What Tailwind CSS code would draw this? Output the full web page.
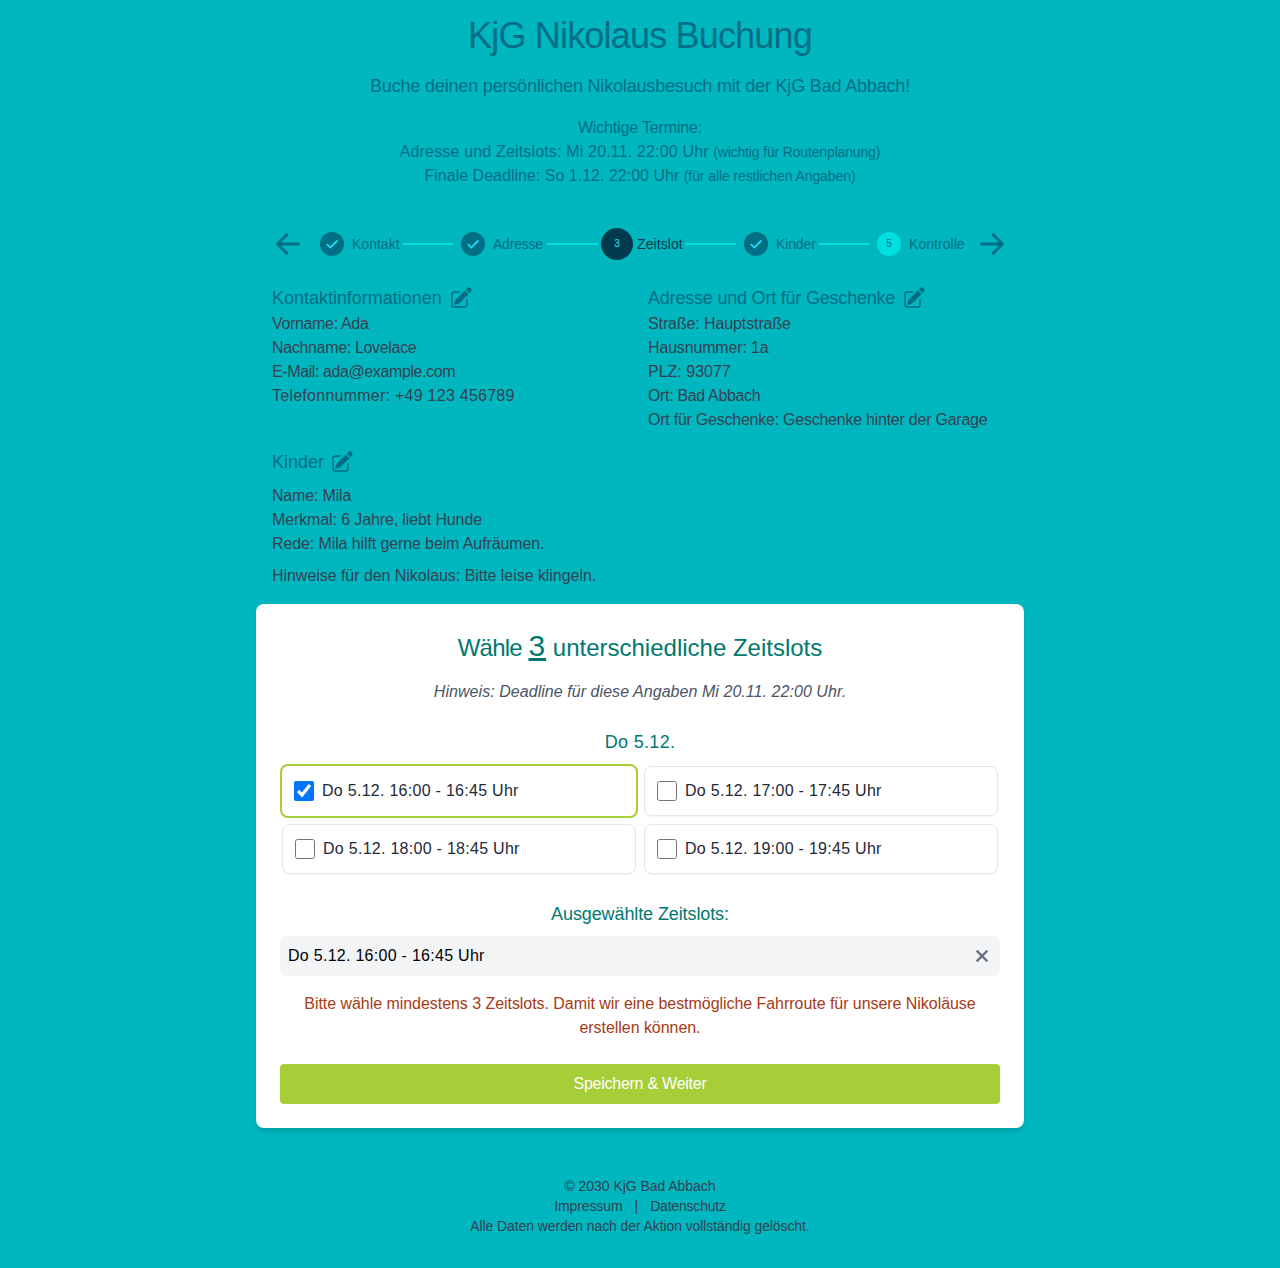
<!DOCTYPE html>
<html lang="de">
<head>
<meta charset="utf-8">
<title>KjG Nikolaus Buchung</title>
<script src="https://cdn.jsdelivr.net/npm/@tailwindcss/browser@4"></script>
</head>
<body class="min-h-screen bg-[#00b6bf] font-['Liberation_Sans',Arial,sans-serif] text-base text-gray-700">
<svg class="hidden">
  <symbol id="edit" viewBox="0 0 24 24"><path d="M21.731 2.269a2.625 2.625 0 0 0-3.712 0l-1.157 1.157 3.712 3.712 1.157-1.157a2.625 2.625 0 0 0 0-3.712ZM19.513 8.199l-3.712-3.712-8.4 8.4a5.25 5.25 0 0 0-1.32 2.214l-.8 2.685a.75.75 0 0 0 .933.933l2.685-.8a5.25 5.25 0 0 0 2.214-1.32l8.4-8.4Z"/><path d="M5.25 5.25a3 3 0 0 0-3 3v10.5a3 3 0 0 0 3 3h10.5a3 3 0 0 0 3-3V13.5a.75.75 0 0 0-1.5 0v5.25a1.5 1.5 0 0 1-1.5 1.5H5.25a1.5 1.5 0 0 1-1.5-1.5V8.25a1.5 1.5 0 0 1 1.5-1.5h5.25a.75.75 0 0 0 0-1.5H5.25Z"/></symbol>
  <symbol id="check" viewBox="0 0 24 24"><path d="m6.8 12 3.6 3.6 7-7.2" fill="none" stroke="currentColor" stroke-width="1.7"/></symbol>
</svg>
<div class="mx-auto w-[768px] pt-4">
  <header class="text-center text-[#006e85]">
    <h1 class="text-4xl leading-10 tracking-[-0.82px]">KjG Nikolaus Buchung</h1>
    <p class="mt-4 text-lg leading-7 tracking-[-0.178px]">Buche deinen persönlichen Nikolausbesuch mit der KjG Bad Abbach!</p>
    <div class="mt-4 leading-6">
      <p class="tracking-[-0.16px]">Wichtige Termine:</p>
      <p><span class="tracking-[0.165px]">Adresse und Zeitslots: Mi 20.11. 22:00 Uhr</span> <span class="text-sm leading-none tracking-[-0.153px]">(wichtig für Routenplanung)</span></p>
      <p><span class="tracking-[0.012px]">Finale Deadline: So 1.12. 22:00 Uhr</span> <span class="text-sm leading-none tracking-[-0.09px]">(für alle restlichen Angaben)</span></p>
    </div>
  </header>

  <nav class="mt-10 flex h-8 items-center px-4 text-sm whitespace-nowrap text-[#006e85]">
    <svg class="mr-4 size-8 shrink-0" viewBox="0 0 32 32" fill="none" stroke="currentColor" stroke-width="3" stroke-linecap="round" stroke-linejoin="round"><path d="M14.8 6.7 5.6 16l9.2 9.3M5.6 16h20.9"/></svg>
    <div class="size-6 shrink-0 rounded-full bg-[#006e85] text-[#22e0ff]"><svg class="size-6"><use href="#check"/></svg></div>
    <span class="ml-2 w-[47px] tracking-[0.017px]">Kontakt</span>
    <div class="mx-1 h-0.5 w-[50px] shrink-0 bg-[#00dfe0]"></div>
    <div class="ml-1 size-6 shrink-0 rounded-full bg-[#006e85] text-[#22e0ff]"><svg class="size-6"><use href="#check"/></svg></div>
    <span class="ml-2 w-[50px] tracking-[-0.22px]">Adresse</span>
    <div class="mx-1 h-0.5 w-[50px] shrink-0 bg-[#00dfe0]"></div>
    <div class="flex size-8 shrink-0 items-center justify-center rounded-full bg-[#003b4d] text-[10px] text-[#22e0ff]">3</div>
    <span class="ml-1 w-[45px] tracking-[0.085px] text-[#003b4d]">Zeitslot</span>
    <div class="mx-1 h-0.5 w-[50px] shrink-0 bg-[#00dfe0]"></div>
    <div class="ml-1 size-6 shrink-0 rounded-full bg-[#006e85] text-[#22e0ff]"><svg class="size-6"><use href="#check"/></svg></div>
    <span class="ml-2 w-[39px] tracking-[-0.12px]">Kinder</span>
    <div class="mx-1 h-0.5 w-[50px] shrink-0 bg-[#00dfe0]"></div>
    <div class="ml-1 flex size-6 shrink-0 items-center justify-center rounded-full bg-[#00dfe0] text-[10px]">5</div>
    <span class="ml-2 w-[55px] tracking-[0.05px]">Kontrolle</span>
    <svg class="ml-3 size-8 shrink-0" viewBox="0 0 32 32" fill="none" stroke="currentColor" stroke-width="3" stroke-linecap="round" stroke-linejoin="round"><path d="m17.2 6.7 9.2 9.3-9.2 9.3M26.4 16H5.5"/></svg>
  </nav>

  <div class="mt-6 grid grid-cols-2 gap-4 px-4 whitespace-nowrap">
    <section>
      <h2 class="flex h-7 items-center text-lg text-[#006e85]"><span class="w-[177px] tracking-[-0.02px]">Kontaktinformationen</span><svg class="size-6 fill-current"><use href="#edit"/></svg></h2>
      <p class="tracking-[-0.34px]">Vorname: Ada</p>
      <p class="tracking-[-0.33px]">Nachname: Lovelace</p>
      <p class="tracking-[-0.4px]">E-Mail: ada@example.com</p>
      <p class="tracking-[0.255px]">Telefonnummer: +49 123 456789</p>
    </section>
    <section>
      <h2 class="flex h-7 items-center text-lg text-[#006e85]"><span class="w-[254px] tracking-[-0.206px]">Adresse und Ort für Geschenke</span><svg class="size-6 fill-current"><use href="#edit"/></svg></h2>
      <p class="tracking-[-0.11px]">Straße: Hauptstraße</p>
      <p class="tracking-[-0.16px]">Hausnummer: 1a</p>
      <p>PLZ: 93077</p>
      <p class="tracking-[-0.34px]">Ort: Bad Abbach</p>
      <p class="tracking-[-0.24px]">Ort für Geschenke: Geschenke hinter der Garage</p>
    </section>
    <section class="col-span-2">
      <h2 class="mb-2 flex h-7 items-center text-lg text-[#006e85]"><span class="w-[58px]">Kinder</span><svg class="size-6 fill-current"><use href="#edit"/></svg></h2>
      <p class="tracking-[-0.18px]">Name: Mila</p>
      <p class="tracking-[-0.12px]">Merkmal: 6 Jahre, liebt Hunde</p>
      <p class="tracking-[-0.11px]">Rede: Mila hilft gerne beim Aufräumen.</p>
      <p class="mt-2 tracking-[-0.046px]">Hinweise für den Nikolaus: Bitte leise klingeln.</p>
    </section>
  </div>

  <main class="mt-4 rounded-lg bg-white p-6 text-center shadow-md">
    <h2 class="h-10 text-2xl leading-9 text-teal-700"><span class="tracking-[-0.8px]">Wähle</span> <span class="text-3xl leading-9 tracking-[1px] underline">3</span> <span>unterschiedliche Zeitslots</span></h2>
    <p class="mt-3 tracking-[0.053px] text-gray-600 italic">Hinweis: Deadline für diese Angaben Mi 20.11. 22:00 Uhr.</p>
    <h3 class="mt-6 text-lg leading-7 tracking-[0.33px] text-teal-700">Do 5.12.</h3>
    <div class="mt-2.5 grid grid-cols-2 gap-2 px-0.5 tracking-[0.278px] text-gray-800">
      <label class="-m-0.5 flex h-[54px] items-center gap-2 rounded-lg border-2 border-[#a6ce39] px-3"><input type="checkbox" checked class="size-5">Do 5.12. 16:00 - 16:45 Uhr</label>
      <label class="flex h-[50px] items-center gap-2 rounded-lg border border-gray-200 px-3 shadow-xs"><input type="checkbox" class="size-5">Do 5.12. 17:00 - 17:45 Uhr</label>
      <label class="flex h-[50px] items-center gap-2 rounded-lg border border-gray-200 px-3 shadow-xs"><input type="checkbox" class="size-5">Do 5.12. 18:00 - 18:45 Uhr</label>
      <label class="flex h-[50px] items-center gap-2 rounded-lg border border-gray-200 px-3 shadow-xs"><input type="checkbox" class="size-5">Do 5.12. 19:00 - 19:45 Uhr</label>
    </div>
    <h3 class="mt-[26px] text-lg leading-7 tracking-[-0.103px] text-teal-700">Ausgewählte Zeitslots:</h3>
    <div class="mt-2 flex h-10 items-center justify-between rounded-md bg-gray-100 px-2 tracking-[0.278px] text-black">Do 5.12. 16:00 - 16:45 Uhr<svg class="size-5 text-gray-500" viewBox="0 0 20 20" fill="none" stroke="currentColor" stroke-width="2.2"><path d="m4.6 4.6 10.8 10.8M15.4 4.6 4.6 15.4"/></svg></div>
    <p class="mt-4 tracking-[-0.048px] text-[#a63a14]">Bitte wähle mindestens 3 Zeitslots. Damit wir eine bestmögliche Fahrroute für unsere Nikoläuse<br>erstellen können.</p>
    <button class="mt-6 block h-10 w-full rounded-sm bg-[#a6ce39] tracking-[-0.25px] text-white">Speichern &amp; Weiter</button>
  </main>

  <footer class="mt-12 text-center text-sm leading-5">
    <p class="tracking-[-0.04px]">© 2030 KjG Bad Abbach</p>
    <p class="flex justify-center"><span class="tracking-[-0.1px]">Impressum</span><span class="mx-3">|</span><span class="tracking-[-0.19px]">Datenschutz</span></p>
    <p class="tracking-[-0.1px]">Alle Daten werden nach der Aktion vollständig gelöscht.</p>
  </footer>
</div>
</body>
</html>
